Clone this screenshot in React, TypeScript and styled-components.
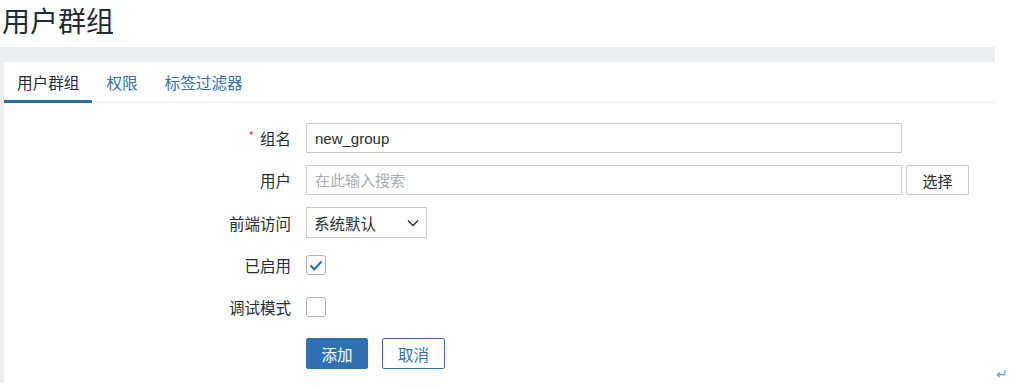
import React from "react";
import styled, { createGlobalStyle } from "styled-components";

const GlobalStyle = createGlobalStyle`
  html, body {
    margin: 0;
    padding: 0;
    background: #ffffff;
  }
  body {
    font-family: "Noto Sans CJK SC", "Liberation Sans", sans-serif;
    color: #1f2c33;
    width: 1024px;
    height: 389px;
    overflow: hidden;
  }
`;

const Header = styled.header`
  height: 47px;
  display: flex;
  align-items: flex-start;
  padding-left: 2px;
`;

const PageTitle = styled.h1`
  margin: 0;
  font-size: 28px;
  font-weight: 400;
  line-height: 40px;
  color: #1f2c33;
`;

const Body = styled.div`
  display: flex;
  align-items: flex-end;
`;

const Backdrop = styled.div`
  width: 995px;
  height: 336px;
  background: #ebeef0;
  padding: 15px 0 0 4px;
  box-sizing: border-box;
  display: flex;
`;

const Panel = styled.section`
  flex: 1;
  background: #ffffff;
  display: flex;
  flex-direction: column;
`;

const TabBar = styled.nav`
  height: 40px;
  display: flex;
  gap: 1px;
  border-bottom: 1px solid #ebeef0;
`;

const Tab = styled.div<{ $active?: boolean }>`
  display: flex;
  align-items: center;
  padding: 0 13px;
  font-size: 15.6px;
  color: ${(p) => (p.$active ? "#1f2c33" : "#2f73b3")};
  border-bottom: 3px solid ${(p) => (p.$active ? "#2d6ba6" : "transparent")};
  margin-bottom: -1px;
  padding-top: 2px;
`;

const Form = styled.div`
  display: grid;
  grid-template-columns: 287px 1fr;
  column-gap: 15px;
  row-gap: 12px;
  align-items: center;
  padding-top: 20px;
`;

const Label = styled.label`
  font-size: 15.5px;
  text-align: right;
  color: #1f2c33;
  display: flex;
  justify-content: flex-end;
  align-items: center;
`;

const Required = styled.span`
  color: #e4473f;
  font-size: 12px;
  margin-right: 6px;
  line-height: 14px;
  position: relative;
  top: -2px;
`;

const Control = styled.div`
  min-height: 30px;
  display: flex;
  align-items: center;
  gap: 4px;
`;

const TextInput = styled.input`
  width: 596px;
  height: 30px;
  box-sizing: border-box;
  border: 1px solid #c4cacd;
  border-radius: 1px;
  padding: 0 8px;
  font-size: 15px;
  font-family: "Liberation Sans", "Noto Sans CJK SC", sans-serif;
  color: #1f2c33;
  outline: none;
  &::placeholder {
    color: #a6aeb3;
    font-family: "Noto Sans CJK SC", sans-serif;
  }
`;

const GrayButton = styled.button`
  width: 63px;
  height: 30px;
  background: #ffffff;
  border: 1px solid #c4cacd;
  border-radius: 2px;
  font-size: 15px;
  font-family: "Noto Sans CJK SC", sans-serif;
  color: #1f2c33;
  padding: 0;
`;

const Select = styled.div`
  width: 121px;
  height: 31px;
  box-sizing: border-box;
  border: 1px solid #c4cacd;
  display: flex;
  align-items: center;
  justify-content: space-between;
  padding: 0 7px 0 7px;
  font-size: 15.5px;
  color: #1f2c33;
`;

const Checkbox = styled.span`
  width: 20px;
  height: 20px;
  box-sizing: border-box;
  border: 1px solid #acb4b9;
  border-radius: 3px;
  background: #ffffff;
  display: flex;
  align-items: center;
  justify-content: center;
`;

const Actions = styled.div`
  grid-column: 2;
  display: flex;
  gap: 14px;
  margin-top: 4px;
`;

const Button = styled.button<{ $primary?: boolean }>`
  height: 31px;
  width: ${(p) => (p.$primary ? "62px" : "63px")};
  border-radius: 2px;
  border: 1px solid #2f72b3;
  background: ${(p) => (p.$primary ? "#2f72b3" : "#ffffff")};
  color: ${(p) => (p.$primary ? "#ffffff" : "#2f72b3")};
  font-size: 15.5px;
  font-family: "Noto Sans CJK SC", sans-serif;
  padding: 0;
`;

const ReturnMark = styled.span`
  color: #5a9ee6;
  font-size: 14px;
  line-height: 14px;
  margin: 0 0 2px 1px;
  font-family: "DejaVu Sans", sans-serif;
`;

const Chevron = () => (
  <svg width="12" height="8" viewBox="0 0 12 8" fill="none">
    <path d="M1 1.5l5 5 5-5" stroke="#1f2c33" strokeWidth="1.3" />
  </svg>
);

const Check = () => (
  <svg width="14" height="11" viewBox="0 0 14 11" fill="none">
    <path d="M1.5 5.5l3.8 3.8L12.5 1.5" stroke="#2f72b3" strokeWidth="2.2" />
  </svg>
);

const App: React.FC = () => {
  return (
    <>
      <GlobalStyle />
      <Header>
        <PageTitle>用户群组</PageTitle>
      </Header>
      <Body>
        <Backdrop>
          <Panel>
            <TabBar>
              <Tab $active>用户群组</Tab>
              <Tab>权限</Tab>
              <Tab>标签过滤器</Tab>
            </TabBar>
            <Form>
              <Label>
                <Required>*</Required>组名
              </Label>
              <Control>
                <TextInput defaultValue="new_group" />
              </Control>

              <Label>用户</Label>
              <Control>
                <TextInput placeholder="在此输入搜索" />
                <GrayButton>选择</GrayButton>
              </Control>

              <Label>前端访问</Label>
              <Control>
                <Select>
                  系统默认
                  <Chevron />
                </Select>
              </Control>

              <Label>已启用</Label>
              <Control>
                <Checkbox>
                  <Check />
                </Checkbox>
              </Control>

              <Label>调试模式</Label>
              <Control>
                <Checkbox />
              </Control>

              <Actions>
                <Button $primary>添加</Button>
                <Button>取消</Button>
              </Actions>
            </Form>
          </Panel>
        </Backdrop>
        <ReturnMark>↵</ReturnMark>
      </Body>
    </>
  );
};

export default App;
